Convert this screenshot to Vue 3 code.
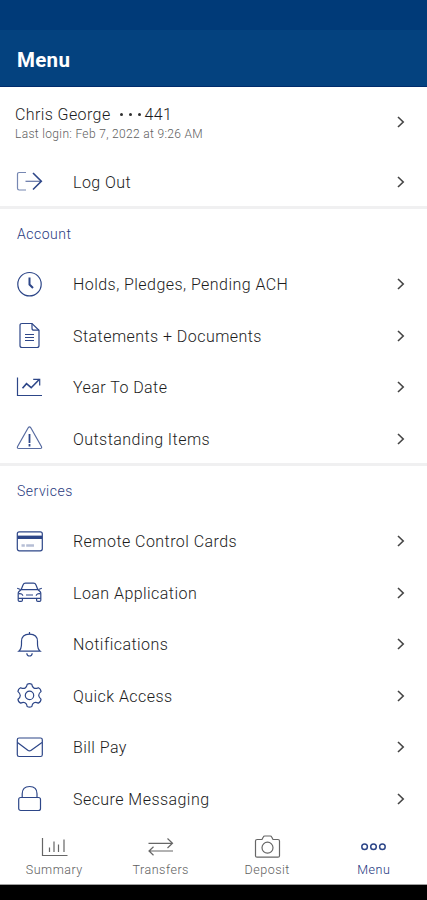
<script setup>
import { ref } from 'vue';

const activeTab = ref('Menu');

const user = {
  name: 'Chris George',
  account: '441',
  lastLogin: 'Feb 7, 2022 at 9:26 AM'
};

const icons = {
  logout: '<path d="M10 4.5H3.2Q1.5 4.5 1.5 6.2V20.3Q1.5 22 3.2 22H10" opacity=".65"/><path d="M9.5 13.3H25" opacity=".75"/><path d="M17 5L25.3 13.3L17 21.5" stroke-width="1.6"/>',
  clock: '<circle cx="13.5" cy="13.2" r="11.7"/><path d="M13.5 6.5V13.5L17 17" stroke-width="2"/>',
  document: '<path d="M16 1.5H6Q4 1.5 4 3.5V23.5Q4 25.5 6 25.5H21Q23 25.5 23 23.5V8.2Z"/><path d="M16 1.5V6.2Q16 8.2 18 8.2H23"/><path d="M9 12.5H18M9 15.5H18M9 18.5H18"/>',
  chart: '<path d="M1.5 3.5V21.5H26"/><path d="M6.5 14.2L10.5 9.7L15.2 13.7L23.5 5.3" stroke-width="1.6"/><path d="M17.2 5.3H23.7V11.5"/>',
  warning: '<path d="M12.2 2.8Q13.5 1 14.8 2.8L25.4 21.4Q26.2 23.4 24.2 23.5H2.8Q.8 23.4 1.6 21.4Z" opacity=".8"/><path d="M13.5 9V18M13.5 19V21.5" stroke-width="1.8"/>',
  card: '<rect x="1.3" y="3.8" width="25" height="19" rx="2"/><path d="M1.5 9.3H26" stroke-width="3.4"/><path d="M5.5 17.5H8.8M10.2 17.5H18" stroke-width="2.6" opacity=".35"/>',
  car: '<path d="M5.2 10.5L7 6Q7.7 4.2 9.5 4.2H17.5Q19.3 4.2 20 6L21.8 10.5M5 10.7H22L24 12.5Q24.8 13.3 24.8 14.5V21.2Q24.8 22.4 23.6 22.4H21.8Q20.6 22.4 20.6 21.2V19.3H6.4V21.2Q6.4 22.4 5.2 22.4H3.4Q2.2 22.4 2.2 21.2V14.5Q2.2 13.3 3 12.5Z"/><path d="M4.5 10.5L1.2 9.3M22.5 10.5L25.8 9.3M2.5 14.8Q6.5 14.2 6.8 16.8M24.5 14.8Q20.5 14.2 20.2 16.8M2.2 19.3H6.4M20.6 19.3H24.8M10 16H17"/>',
  bell: '<path d="M2.8 20.2Q5.5 18 5.5 13V10.5Q5.5 3.2 13.5 3.2T21.5 10.5V13Q21.5 18 24.2 20.2Z"/><path d="M13.5 1V3.2M10.8 22.2Q11 25 13.5 25T16.2 22.2"/>',
  gear: '<path d="M11.2 2.3Q13.5 1 15.8 2.3Q16.2 5.2 18 6.1Q19.8 7 22.3 5.7Q24.9 6.6 25 9.6Q22.7 11.4 22.7 13.3T25 17.2Q24.9 20.2 22.3 21.1Q19.8 19.8 18 20.7Q16.2 21.6 15.8 24.5Q13.5 25.8 11.2 24.5Q10.8 21.6 9 20.7Q7.2 19.8 4.7 21.1Q2.1 20.2 2 17.2Q4.3 15.4 4.3 13.4T2 9.6Q2.1 6.6 4.7 5.7Q7.2 7 9 6.1Q10.8 5.2 11.2 2.3Z"/><circle cx="13.5" cy="13.4" r="4.2"/>',
  mail: '<rect x="1.3" y="4" width="25" height="18.5" rx="1.8"/><path d="M1.5 8.5L11.8 16.3Q13.5 17.6 15.2 16.3L26 8.5"/>',
  lock: '<rect x="2.7" y="12.5" width="21.8" height="13" rx="2"/><path d="M6.2 12.5V8.8Q6.2 1.5 13.6 1.5T21 8.8V12.5"/>',
  summary: '<path d="M1.5 4V21.5H26.5"/><path d="M8.5 13.5V18M13 7.5V18M17.5 10.5V18M23 5.5V18"/>',
  transfers: '<path d="M1.5 9.3H25.5M20.5 4.5L25.5 9.3L20.5 14M26 17H2M6.5 12.8L2 17L6.5 21.3"/>',
  deposit: '<path d="M3.2 5.5H8L9.3 2.9Q9.7 2 10.8 2H16.2Q17.3 2 17.7 2.9L19 5.5H24Q25.5 5.5 25.5 7V21.7Q25.5 23.2 24 23.2H3Q1.5 23.2 1.5 21.7V7Q1.5 5.5 3.2 5.5Z"/><circle cx="13.5" cy="13.7" r="5.5"/>',
  menu: '<circle cx="4.6" cy="12.8" r="2.8"/><circle cx="13.5" cy="12.8" r="2.8"/><circle cx="22.4" cy="12.8" r="2.8"/>'
};

const sections = [
  {
    title: 'Account',
    items: [
      { label: 'Holds, Pledges, Pending ACH', icon: 'clock' },
      { label: 'Statements + Documents', icon: 'document' },
      { label: 'Year To Date', icon: 'chart' },
      { label: 'Outstanding Items', icon: 'warning' }
    ]
  },
  {
    title: 'Services',
    items: [
      { label: 'Remote Control Cards', icon: 'card' },
      { label: 'Loan Application', icon: 'car' },
      { label: 'Notifications', icon: 'bell' },
      { label: 'Quick Access', icon: 'gear' },
      { label: 'Bill Pay', icon: 'mail' },
      { label: 'Secure Messaging', icon: 'lock' }
    ]
  }
];

const tabs = [
  { label: 'Summary', icon: 'summary' },
  { label: 'Transfers', icon: 'transfers' },
  { label: 'Deposit', icon: 'deposit' },
  { label: 'Menu', icon: 'menu' }
];
</script>

<template>
  <div class="screen">
    <div class="status-bar"></div>
    <header class="app-header">
      <h1 class="app-title">Menu</h1>
    </header>

    <main class="menu">
      <button class="profile">
        <span class="profile-text">
          <span class="profile-name">
            {{ user.name }}
            <span class="dots"><i></i><i></i><i></i></span>
            {{ user.account }}
          </span>
          <span class="profile-login">Last login: {{ user.lastLogin }}</span>
        </span>
        <svg class="chevron" viewBox="0 0 8 12"><path d="M1 1L6.2 6L1 11" /></svg>
      </button>
      <button class="menu-item">
        <svg class="icon" viewBox="0 0 27 27" v-html="icons.logout"></svg>
        <span class="menu-label">Log Out</span>
        <svg class="chevron" viewBox="0 0 8 12"><path d="M1 1L6.2 6L1 11" /></svg>
      </button>

      <section v-for="section in sections" :key="section.title" class="section">
        <h2 class="section-title">{{ section.title }}</h2>
        <button v-for="item in section.items" :key="item.label" class="menu-item">
          <svg class="icon" viewBox="0 0 27 27" v-html="icons[item.icon]"></svg>
          <span class="menu-label">{{ item.label }}</span>
          <svg class="chevron" viewBox="0 0 8 12"><path d="M1 1L6.2 6L1 11" /></svg>
        </button>
      </section>
    </main>

    <nav class="tab-bar">
      <button
        v-for="tab in tabs"
        :key="tab.label"
        class="tab"
        :class="{ 'tab-active': activeTab === tab.label }"
        @click="activeTab = tab.label"
      >
        <svg class="icon" viewBox="0 0 27 27" v-html="icons[tab.icon]"></svg>
        <span class="tab-label">{{ tab.label }}</span>
      </button>
    </nav>
    <div class="system-bar"></div>
  </div>
</template>

<style>
body {
  margin: 0;
}
</style>

<style scoped>
.screen {
  display: flex;
  flex-direction: column;
  height: 900px;
  overflow: hidden;
  background: #ffffff;
  font-family: Roboto, sans-serif;
  color: #1c1c1c;
}

button {
  border: none;
  background: transparent;
  padding: 0;
  color: inherit;
  font-family: inherit;
  text-align: left;
  cursor: pointer;
}

.status-bar {
  flex: none;
  height: 30px;
  background: #003a78;
}

.app-header {
  flex: none;
  box-sizing: border-box;
  display: flex;
  align-items: center;
  height: 57px;
  padding: 3px 17px 0;
  background: #04427f;
  border-bottom: 1px solid #002c6c;
}

.app-title {
  margin: 0;
  color: #ffffff;
  font-size: 20.5px;
  font-weight: 700;
  letter-spacing: 0.3px;
}

.menu {
  flex: 1;
  min-height: 0;
}

.profile {
  box-sizing: border-box;
  display: flex;
  align-items: center;
  justify-content: space-between;
  width: 100%;
  height: 69px;
  padding: 0 22px 0 15px;
}

.profile-text {
  display: flex;
  flex-direction: column;
  padding-top: 4px;
}

.profile-name {
  display: flex;
  align-items: center;
  font-size: 16px;
  font-weight: 300;
  letter-spacing: 0.4px;
  line-height: 20px;
}

.dots {
  display: flex;
  gap: 6px;
  margin: 0 4px 0 9px;
}

.dots i {
  width: 3px;
  height: 3px;
  border-radius: 50%;
  background: #303030;
}

.profile-login {
  color: #606060;
  font-size: 12px;
  font-weight: 300;
  letter-spacing: 0.33px;
  line-height: 18px;
}

.menu-item {
  box-sizing: border-box;
  display: flex;
  align-items: center;
  width: 100%;
  height: 51.5px;
  padding: 0 22px 0 16px;
}

.icon {
  flex: none;
  width: 27px;
  height: 27px;
  fill: none;
  stroke: #2d4688;
  stroke-width: 1.2;
}

.menu-label {
  flex: 1;
  margin-left: 30px;
  padding-top: 1px;
  font-size: 16px;
  font-weight: 300;
  letter-spacing: 0.45px;
}

.chevron {
  flex: none;
  width: 8px;
  height: 12px;
  fill: none;
  stroke: #444444;
  stroke-width: 1.6;
}

.section {
  margin-top: -1.5px;
  border-top: 3px solid #f0f0f1;
}

.section-title {
  box-sizing: border-box;
  height: 49.5px;
  margin: 0;
  padding-left: 17px;
  color: #2a3a80;
  font-size: 14px;
  font-weight: 300;
  letter-spacing: 0.5px;
  line-height: 51px;
}

.tab-bar {
  flex: none;
  box-sizing: border-box;
  display: flex;
  height: 60px;
  padding: 10px 0 0 1px;
  background: #ffffff;
}

.tab {
  flex: 1;
  display: flex;
  flex-direction: column;
  align-items: center;
  color: #606060;
}

.tab .icon {
  stroke: #666666;
}

.tab-active {
  color: #20347c;
}

.tab-active .icon {
  stroke: #2d4688;
  stroke-width: 1.5;
}

.tab-label {
  font-size: 12.5px;
  font-weight: 300;
  letter-spacing: 0.5px;
  line-height: 17px;
}

.system-bar {
  flex: none;
  box-sizing: border-box;
  height: 16px;
  background: #000000;
  border-top: 1px solid #a0a0a0;
}
</style>
